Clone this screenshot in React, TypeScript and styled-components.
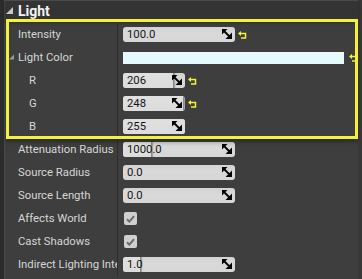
import React from 'react';
import styled, { createGlobalStyle } from 'styled-components';

const GlobalStyle = createGlobalStyle`
	html, body {
		margin: 0;
		padding: 0;
		background: #3e3e3e;
	}
	body {
		font-family: Roboto, "Liberation Sans", sans-serif;
		-webkit-font-smoothing: antialiased;
	}
`;

const highlight = '#f4f13b';

const Panel = styled.div`
	display: flex;
	width: 362px;
	height: 279px;
	overflow: hidden;
	background: #3e3e3e;
`;

const LeftRail = styled.div`
	width: 4px;
	flex-shrink: 0;
	background: #2c2c2c;
	border-right: 1px solid #4a4a4a;
`;

const RightRail = styled.div`
	width: 4px;
	flex-shrink: 0;
	background: #383838;
`;

const Content = styled.div`
	flex: 1;
	display: flex;
	flex-direction: column;
	min-width: 0;
`;

const CategoryHeader = styled.div`
	position: relative;
	z-index: 1;
	height: 20px;
	box-sizing: border-box;
	display: flex;
	align-items: center;
	gap: 5px;
	padding-left: 1px;
	background: #343434;
	border-top: 1px solid #4b4b4b;
	box-shadow: 0 2px 4px rgba(0, 0, 0, 0.35);
	color: #f2f2f2;
	font-size: 14px;
	font-weight: bold;
`;

const Highlight = styled.div`
	position: relative;
	padding-top: 3px;

	&::after {
		content: "";
		position: absolute;
		z-index: 2;
		top: -1px;
		bottom: -1px;
		left: 1px;
		right: 0;
		border: 3px solid ${highlight};
		box-shadow: 0 3px 4px rgba(0, 0, 0, 0.3);
		pointer-events: none;
	}
`;

const Row = styled.div`
	display: flex;
	height: 23px;
`;

const Label = styled.div<{ $indent?: boolean }>`
	position: relative;
	width: 113px;
	flex-shrink: 0;
	box-sizing: border-box;
	padding-left: ${({ $indent }) => $indent ? '24px' : '13px'};
	border-right: 1px solid #2e2e2e;
	display: flex;
	align-items: center;
	color: #d6d6d6;
	font-size: 11.3px;
	white-space: nowrap;
	overflow: hidden;
`;

const Expander = styled.svg`
	position: absolute;
	left: 4px;
	top: 8px;
`;

const Value = styled.div`
	flex: 1;
	display: flex;
	align-items: center;
	gap: 3px;
	padding-left: 5px;
	min-width: 0;
`;

const NumberBox = styled.div<{ $narrow?: boolean }>`
	position: relative;
	width: ${({ $narrow }) => $narrow ? '62px' : '112px'};
	height: 15px;
	flex-shrink: 0;
	border-radius: 3px;
	overflow: hidden;
	background: linear-gradient(#d2d2d2, #d9d9d9 40%, #d6d6d6);
	color: #141414;
	font-size: 11.3px;
	line-height: 15px;
`;

const Fill = styled.div`
	position: absolute;
	top: 0;
	bottom: 0;
	left: 0;
	background: linear-gradient(#e0e0e0, #dcdcdc);
	border-right: 1px solid #8a8a8a;
	box-shadow: 1px 0 1px rgba(0, 0, 0, 0.25);
`;

const NumberText = styled.span`
	position: relative;
	padding-left: 4px;
`;

const Spinner = styled.svg`
	position: absolute;
	right: 3px;
	top: 2px;
`;

const ColorBar = styled.div`
	flex: 1;
	height: 12px;
	margin-right: 2px;
	background: #e4faff;
`;

const CheckBox = styled.div`
	width: 13px;
	height: 13px;
	margin-left: 1px;
	border-radius: 2px;
	background: #cfcfcf;
	display: flex;
	align-items: center;
	justify-content: center;
`;

const ResetIcon = () => (
	<svg width="9" height="8" viewBox="0 0 9 8" style={{ flexShrink: 0 }}>
		<path d="M0 2.5 L3 0 L3 5 Z" fill={highlight} />
		<path d="M3 2.5 H7.5 V7 H3" fill="none" stroke={highlight} strokeWidth="1.5" />
	</svg>
);

const SpinIcon = () => (
	<Spinner width="10" height="10" viewBox="0 0 10 10">
		<path d="M0 0 H5.5 L0 5.5 Z" fill="#000" />
		<path d="M10 10 H3.5 L10 3.5 Z" fill="#000" />
		<path d="M2 2 L8 8" stroke="#000" strokeWidth="1.8" />
	</Spinner>
);

const Check = () => (
	<svg width="9" height="8" viewBox="0 0 9 8">
		<path d="M1 4.2 L3.4 6.6 L8 1.2" fill="none" stroke="#6b6b6b" strokeWidth="2" />
	</svg>
);

const Triangle = ({ size }: { size: number }) => (
	<svg width={size} height={size} viewBox="0 0 6 6" style={{ flexShrink: 0 }}>
		<path d="M6 0 V6 H0 Z" fill="#c9c9c9" />
	</svg>
);

interface INumberProps {
	value: string;
	fill?: number;
	narrow?: boolean;
}
const NumberField: React.FC<INumberProps> = ({ value, fill, narrow }) => (
	<NumberBox $narrow={narrow}>
		{fill !== undefined && <Fill style={{ width: `${Math.round(fill * 100)}%` }} />}
		<NumberText>{value}</NumberText>
		<SpinIcon />
	</NumberBox>
);

const channels = [
	{ name: 'R', value: 206, reset: true },
	{ name: 'G', value: 248, reset: true },
	{ name: 'B', value: 255, reset: false },
];

const App: React.FC = () => (
	<Panel>
		<GlobalStyle />
		<LeftRail />
		<Content>
			<CategoryHeader>
				<Triangle size={7} />
				Light
			</CategoryHeader>
			<Highlight>
				<Row>
					<Label>Intensity</Label>
					<Value>
						<NumberField value="100.0" />
						<ResetIcon />
					</Value>
				</Row>
				<Row>
					<Label>
						<Expander width="5" height="6" viewBox="0 0 6 6">
							<path d="M6 0 V6 H0 Z" fill="#9a9a9a" />
						</Expander>
						Light Color
					</Label>
					<Value>
						<ColorBar />
						<ResetIcon />
					</Value>
				</Row>
				{channels.map(c => (
					<Row key={c.name}>
						<Label $indent>{c.name}</Label>
						<Value>
							<NumberField value={String(c.value)} fill={c.value / 255} narrow />
							{c.reset && <ResetIcon />}
						</Value>
					</Row>
				))}
			</Highlight>
			<Row>
				<Label>Attenuation Radius</Label>
				<Value><NumberField value="1000.0" fill={0.25} /></Value>
			</Row>
			<Row>
				<Label>Source Radius</Label>
				<Value><NumberField value="0.0" /></Value>
			</Row>
			<Row>
				<Label>Source Length</Label>
				<Value><NumberField value="0.0" /></Value>
			</Row>
			<Row>
				<Label>Affects World</Label>
				<Value><CheckBox><Check /></CheckBox></Value>
			</Row>
			<Row>
				<Label>Cast Shadows</Label>
				<Value><CheckBox><Check /></CheckBox></Value>
			</Row>
			<Row>
				<Label>Indirect Lighting Intensity</Label>
				<Value><NumberField value="1.0" fill={0.15} /></Value>
			</Row>
		</Content>
		<RightRail />
	</Panel>
);

export default App;
